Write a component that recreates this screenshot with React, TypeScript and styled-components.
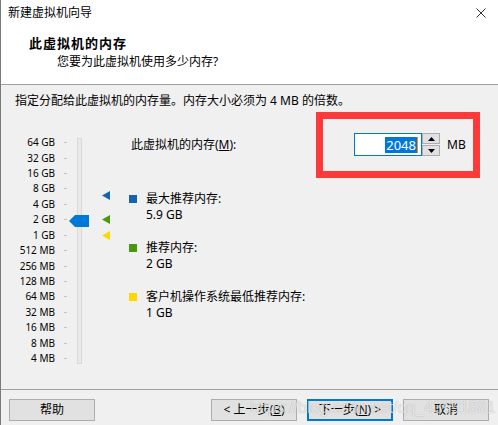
import styled, { createGlobalStyle } from 'styled-components';

const GlobalStyle = createGlobalStyle`
  html, body {
    margin: 0;
    padding: 0;
    background: #f0f0f0;
  }
  body {
    font-family: "Segoe UI", "Noto Sans", "Noto Sans CJK SC", sans-serif;
    font-size: 12px;
    color: #000;
  }
`;

const Window = styled.div`
  position: relative;
  box-sizing: border-box;
  width: 498px;
  height: 425px;
  display: flex;
  flex-direction: column;
  background: #f0f0f0;
  border-left: 1px solid #7a7a7a;
  overflow: hidden;
`;

const TitleBar = styled.div`
  height: 26px;
  display: flex;
  align-items: center;
  justify-content: space-between;
  padding: 0 10px 0 7px;
  background: #fff;
  line-height: 16px;
`;

const Header = styled.div`
  box-sizing: border-box;
  height: 59px;
  padding: 8px 0 0 28px;
  background: #fff;
  border-bottom: 1px solid #a0a0a0;
`;

const HeaderTitle = styled.div`
  font-size: 13px;
  font-weight: bold;
  letter-spacing: 1px;
  line-height: 18px;
`;

const HeaderSub = styled.div`
  margin: 2px 0 0 28px;
  line-height: 16px;
`;

const Instruction = styled.div`
  padding: 8px 0 0 14px;
  line-height: 16px;
  height: 25px;
`;

const Main = styled.div`
  display: flex;
  height: 271px;
`;

const Slider = styled.div`
  position: relative;
  flex-shrink: 0;
  width: 128px;
`;

const Scale = styled.div`
  display: grid;
  grid-template-rows: repeat(15, 15.43px);
  padding-top: 17px;
`;

const ScaleRow = styled.div`
  display: flex;
  align-items: center;
`;

const ScaleLabel = styled.span`
  width: 54px;
  text-align: right;
  font-size: 10px;
  line-height: 15px;
  white-space: nowrap;
`;

const Tick = styled.span`
  margin-left: 9px;
  width: 3px;
  height: 1px;
  background: #c4c4c4;
`;

const Track = styled.div`
  position: absolute;
  left: 76px;
  top: 20px;
  width: 3px;
  height: 224px;
  background: #e9e9e9;
  border: 1px solid #d9d9d9;
`;

const Thumb = styled.svg`
  position: absolute;
  left: 68px;
  top: 97px;
`;

const Marker = styled.svg`
  position: absolute;
  left: 101px;
`;

const Content = styled.div`
  display: flex;
  flex-direction: column;
  padding-top: 15px;
`;

const MemoryRow = styled.div`
  display: flex;
  align-items: center;
  height: 23px;
`;

const MemoryLabel = styled.span`
  width: 225px;
  padding-left: 2px;
  box-sizing: border-box;
  line-height: 16px;
`;

const Input = styled.div`
  box-sizing: border-box;
  width: 68px;
  height: 23px;
  border: 1px solid #0078d7;
  background: #fff;
  display: flex;
  align-items: center;
  justify-content: flex-end;
  padding-right: 3px;
`;

const Selected = styled.span`
  background: #0078d7;
  color: #fff;
  font-size: 13px;
  line-height: 16px;
  padding: 0 1px;
`;

const Caret = styled.span`
  width: 1px;
  height: 16px;
  background: #ff8c00;
`;

const Spinner = styled.div`
  display: flex;
  flex-direction: column;
  gap: 1px;
  width: 18px;
  height: 23px;
`;

const SpinButton = styled.div`
  box-sizing: border-box;
  flex: 1;
  border: 1px solid #adadad;
  background: #e1e1e1;
  display: flex;
  align-items: center;
  justify-content: center;
`;

const Unit = styled.span`
  margin-left: 7px;
  line-height: 16px;
`;

const Legend = styled.div`
  display: flex;
  flex-direction: column;
  gap: 17px;
  margin-top: 35px;
`;

const LegendItem = styled.div`
  display: flex;
  align-items: flex-start;
`;

const Swatch = styled.span<{ $color: string }>`
  width: 8px;
  height: 8px;
  margin-top: 4px;
  background: ${(p) => p.$color};
`;

const LegendText = styled.div`
  margin-left: 9px;
  line-height: 16px;
`;

const Footer = styled.div`
  display: flex;
  align-items: flex-start;
  gap: 10px;
  padding: 9px 9px 0 8px;
  border-top: 1px solid #a0a0a0;
  flex: 1;
`;

const Button = styled.div<{ $primary?: boolean }>`
  box-sizing: border-box;
  width: 86px;
  height: 22px;
  display: flex;
  align-items: center;
  justify-content: center;
  background: #e1e1e1;
  border: ${(p) => (p.$primary ? '2px solid #0078d7' : '1px solid #adadad')};
  line-height: 16px;
  white-space: nowrap;
`;

const Spacer = styled.div`
  flex: 1;
`;

const Under = styled.span`
  text-decoration: underline;
`;

const Highlight = styled.div`
  position: absolute;
  left: 315px;
  top: 112px;
  width: 164px;
  height: 66px;
  box-sizing: border-box;
  border: 7px solid #fd3a3a;
  pointer-events: none;
`;

const Watermark = styled.div`
  position: absolute;
  left: 249px;
  top: 398px;
  font-family: "Liberation Sans", Arial, sans-serif;
  font-size: 16px;
  line-height: 20px;
  color: rgba(255, 255, 255, 0.7);
  text-shadow: 0 0 1px rgba(0, 0, 0, 0.3);
  white-space: nowrap;
  pointer-events: none;
`;

const scale = [
  '64 GB', '32 GB', '16 GB', '8 GB', '4 GB', '2 GB', '1 GB',
  '512 MB', '256 MB', '128 MB', '64 MB', '32 MB', '16 MB', '8 MB', '4 MB',
];

// y of a size (in GB) inside the slider, on the log scale
const rowY = (gb: number) => 17 + 7.7 + (6 - Math.log2(gb)) * 15.43;

const markers = [
  { gb: 5.9, color: '#1363b0' },
  { gb: 2, color: '#4a980f' },
  { gb: 1, color: '#ffd700' },
];

export default function App() {
  return (
    <>
      <GlobalStyle />
      <Window>
        <TitleBar>
          <span>新建虚拟机向导</span>
          <svg width="14" height="10" viewBox="0 0 10 10">
            <path d="M0.5 0.5 L9.5 9.5 M9.5 0.5 L0.5 9.5" stroke="#000" strokeWidth="0.8" fill="none" />
          </svg>
        </TitleBar>
        <Header>
          <HeaderTitle>此虚拟机的内存</HeaderTitle>
          <HeaderSub>您要为此虚拟机使用多少内存?</HeaderSub>
        </Header>
        <Instruction>指定分配给此虚拟机的内存量。内存大小必须为 4 MB 的倍数。</Instruction>
        <Main>
          <Slider>
            <Scale>
              {scale.map((s) => (
                <ScaleRow key={s}>
                  <ScaleLabel>{s}</ScaleLabel>
                  <Tick />
                </ScaleRow>
              ))}
            </Scale>
            <Track />
            <Thumb width="20" height="12" viewBox="0 0 20 12">
              <polygon points="0,6 6,0 20,0 20,12 6,12" fill="#0078d7" />
            </Thumb>
            {markers.map((m) => (
              <Marker
                key={m.gb}
                width="8"
                height="9"
                viewBox="0 0 8 9"
                style={{ top: rowY(m.gb) - 4.5 }}
              >
                <polygon points="0,4.5 8,0 8,9" fill={m.color} />
              </Marker>
            ))}
          </Slider>
          <Content>
            <MemoryRow>
              <MemoryLabel>
                此虚拟机的内存(<Under>M</Under>):
              </MemoryLabel>
              <Input>
                <Selected>2048</Selected>
                <Caret />
              </Input>
              <Spinner>
                <SpinButton>
                  <svg width="7" height="4" viewBox="0 0 7 4">
                    <polygon points="3.5,0 7,4 0,4" fill="#000" />
                  </svg>
                </SpinButton>
                <SpinButton>
                  <svg width="7" height="4" viewBox="0 0 7 4">
                    <polygon points="0,0 7,0 3.5,4" fill="#000" />
                  </svg>
                </SpinButton>
              </Spinner>
              <Unit>MB</Unit>
            </MemoryRow>
            <Legend>
              <LegendItem>
                <Swatch $color="#1363b0" />
                <LegendText>
                  最大推荐内存:
                  <br />
                  5.9 GB
                </LegendText>
              </LegendItem>
              <LegendItem>
                <Swatch $color="#4a980f" />
                <LegendText>
                  推荐内存:
                  <br />
                  2 GB
                </LegendText>
              </LegendItem>
              <LegendItem>
                <Swatch $color="#ffd700" />
                <LegendText>
                  客户机操作系统最低推荐内存:
                  <br />
                  1 GB
                </LegendText>
              </LegendItem>
            </Legend>
          </Content>
        </Main>
        <Footer>
          <Button>帮助</Button>
          <Spacer />
          <Button>
            &lt; 上一步(<Under>B</Under>)
          </Button>
          <Button $primary>
            下一步(<Under>N</Under>) &gt;
          </Button>
          <Button>取消</Button>
        </Footer>
        <Highlight />
        <Watermark>https://blog.csdn.net/qq_43591881</Watermark>
      </Window>
    </>
  );
}
